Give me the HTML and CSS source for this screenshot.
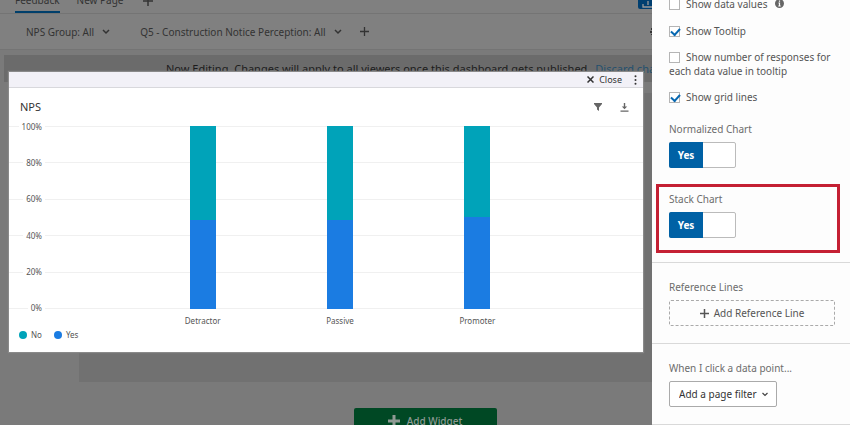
FILE: index.html
```html
<!DOCTYPE html>
<html lang="en">
<head>
<meta charset="utf-8">
<title>NPS dashboard</title>
<link rel="stylesheet" href="styles.css">
</head>
<body>
<div class="app">
  <main class="page">
    <header class="tabs">
      <a class="tab tab-active" href="#">Feedback</a>
      <a class="tab" href="#">New Page</a>
      <button class="plain tab-add" aria-label="Add page"><svg width="10" height="10" viewBox="0 0 10 10"><path d="M5 0v10M0 5h10" stroke="currentColor" stroke-width="1.5"/></svg></button>
      <button class="share" aria-label="Publish"><svg width="10" height="7" viewBox="0 0 10 7"><path d="M1 3v3h9M6 0v4" fill="none" stroke="currentColor" stroke-width="1.3"/></svg></button>
    </header>
    <nav class="filters">
      <button class="plain filter">NPS Group: All <svg width="8" height="6" viewBox="0 0 8 6"><path d="M1 1l3 3 3-3" fill="none" stroke="currentColor" stroke-width="1.5"/></svg></button>
      <button class="plain filter">Q5 - Construction Notice Perception: All <svg width="8" height="6" viewBox="0 0 8 6"><path d="M1 1l3 3 3-3" fill="none" stroke="currentColor" stroke-width="1.5"/></svg></button>
      <button class="plain" aria-label="Add filter"><svg width="9" height="9" viewBox="0 0 9 9"><path d="M4.500 0v9M0 4.500h9" stroke="currentColor" stroke-width="1.300"/></svg></button>
      <button class="plain gear" aria-label="Settings"><svg width="3" height="10" viewBox="0 0 3 10"><path d="M1 4h2v2H1zM2 1h1v2H2zM2 7h1v1H2z" fill="currentColor"/></svg></button>
    </nav>
    <div class="banner"><span>Now Editing. Changes will apply to all viewers once this dashboard gets published.</span><a href="#">Discard changes</a></div>
    <div class="canvas"></div>
    <button class="add-widget"><svg width="12" height="12" viewBox="0 0 12 12"><path d="M6 0v12M0 6h12" stroke="currentColor" stroke-width="3"/></svg>Add Widget</button>

    <section class="widget">
      <div class="widget-bar">
        <button class="plain close"><svg width="7" height="7" viewBox="0 0 7 7"><path d="M.5 .5l6 6M6.500 .5l-6 6" stroke="currentColor" stroke-width="1.5"/></svg>Close</button>
        <button class="plain" aria-label="More"><svg width="3" height="10" viewBox="0 0 3 10" fill="currentColor"><circle cx="1.500" cy="1.200" r="1"/><circle cx="1.500" cy="5" r="1"/><circle cx="1.500" cy="8.800" r="1"/></svg></button>
      </div>
      <div class="widget-head">
        <h2>NPS</h2>
        <button class="plain" aria-label="Filter"><svg width="8" height="8" viewBox="0 0 8 8"><path d="M0 0h8v1L5 4.500V8L3 6.500v-2L0 1z" fill="currentColor"/></svg></button>
        <button class="plain" aria-label="Download"><svg width="9" height="9" viewBox="0 0 9 9"><path d="M3.800 0h1.400v3.500h2L4.500 6.300 1.800 3.500h2zM.5 7.500h8v1.200h-8z" fill="currentColor"/></svg></button>
      </div>
      <div class="chart">
        <div class="grid">
          <div class="tick"><span>100%</span></div>
          <div class="tick"><span>80%</span></div>
          <div class="tick"><span>60%</span></div>
          <div class="tick"><span>40%</span></div>
          <div class="tick"><span>20%</span></div>
          <div class="tick"><span>0%</span></div>
        </div>
        <div class="bars">
          <div class="bar"><div class="yes" style="height:48.6%"></div></div>
          <div class="bar"><div class="yes" style="height:48.6%"></div></div>
          <div class="bar"><div class="yes" style="height:50.3%"></div></div>
        </div>
      </div>
      <div class="categories"><span>Detractor</span><span>Passive</span><span>Promoter</span></div>
      <div class="legend"><span class="key key-no">No</span><span class="key key-yes">Yes</span></div>
    </section>
  </main>

  <aside class="panel">
    <div class="options">
      <div class="option option-first"><label><input type="checkbox">Show data values</label><svg class="info" width="9" height="9" viewBox="0 0 9 9"><circle cx="4.500" cy="4.500" r="4.500" fill="#666"/><path d="M4.500 1.500v1.300M3.500 4h1v3M3.300 7h2.400" fill="none" stroke="#fff" stroke-width="1.200"/></svg></div>
      <div class="option"><label><input type="checkbox" checked>Show Tooltip</label></div>
      <div class="option"><label><input type="checkbox">Show number of responses for each data value in tooltip</label></div>
      <div class="option"><label><input type="checkbox" checked>Show grid lines</label></div>
    </div>
    <div class="field normalized">
      <span class="label">Normalized Chart</span>
      <button class="toggle" role="switch" aria-checked="true" aria-label="Normalized Chart"><span>Yes</span></button>
    </div>
    <div class="field stack">
      <span class="label">Stack Chart</span>
      <button class="toggle" role="switch" aria-checked="true" aria-label="Stack Chart"><span>Yes</span></button>
    </div>
    <div class="field block">
      <span class="label">Reference Lines</span>
      <button class="add-line"><svg width="9" height="9" viewBox="0 0 9 9"><path d="M4.500 0v9M0 4.500h9" stroke="currentColor" stroke-width="1.500"/></svg>Add Reference Line</button>
    </div>
    <div class="field block">
      <label class="label" for="action">When I click a data point...</label>
      <div class="select"><select id="action"><option>Add a page filter</option></select><svg width="6" height="5" viewBox="0 0 6 5"><path d="M.5 1L3 3.500 5.500 1" fill="none" stroke="#444" stroke-width="1.200"/></svg></div>
    </div>
    <div class="block"></div>
  </aside>
</div>
</body>
</html>
```
FILE: styles.css
```css
* { box-sizing: border-box; }
body {
  margin: 0;
  font: 10px/14px "Noto Sans", "Open Sans", sans-serif;
  color: #333;
}
button, select { font: inherit; color: inherit; }
button { padding: 0; }
svg { flex: none; display: block; }
.plain { border: 0; background: none; display: flex; align-items: center; }

.app { display: flex; height: 100vh; overflow: hidden; }
.page {
  position: relative;
  flex: 1;
  min-width: 0;
  overflow: hidden;
  display: flex;
  flex-direction: column;
  background: #7a7a7a;
}
.tabs {
  height: 14px;
  flex: none;
  display: flex;
  align-items: flex-end;
  padding-left: 15px;
  gap: 17px;
  background: #808080;
  border-bottom: 1px solid #747474;
}
.tab { height: 20px; color: #333; text-decoration: none; }
.tab-active { border-bottom: 2px solid #003f6b; }
.tab-add { height: 25px; margin-left: 3px; align-items: center; }
.share {
  align-self: flex-start;
  margin-left: auto;
  width: 14px;
  height: 9px;
  border: 0;
  border-radius: 0 0 0 2px;
  background: #003f70;
  color: #999;
  padding-left: 4px;
}
.filters {
  height: 36px;
  flex: none;
  display: flex;
  align-items: center;
  gap: 18px;
  padding-left: 26px;
  background: #808080;
  border-bottom: 1px solid #747474;
}
.filter { gap: 8px; }
.filter:first-child { margin-right: 12px; }
.gear { margin-left: auto; }
.banner {
  height: 27px;
  flex: none;
  margin: 5px 0 0 4px;
  padding-left: 162px;
  display: flex;
  align-items: center;
  gap: 5px;
  white-space: nowrap;
  overflow: hidden;
  font-size: 11px;
  color: #1c1c1c;
  background: #6b6b6b;
}
.banner a { color: #24506e; text-decoration: none; }
.canvas { height: 289px; flex: none; margin: 11px 0 0 79px; background: #717171; }
.add-widget {
  flex: none;
  align-self: center;
  margin: 26px 0 0 198px;
  width: 143px;
  height: 26px;
  display: flex;
  align-items: center;
  justify-content: center;
  gap: 7px;
  border: 0;
  border-radius: 2px;
  background: #004824;
  color: #8f9a94;
  font-weight: 500;
}

/* Expanded widget floating over the dimmed dashboard */
.widget {
  position: absolute;
  top: 72px;
  left: 9px;
  right: 9px;
  height: 280px;
  background: #fff;
  box-shadow: 0 0 1px 1px #8a8a8a;
  font-size: 8px;
  line-height: 12px;
  color: #555;
}
.widget-bar {
  height: 16px;
  display: flex;
  justify-content: flex-end;
  gap: 12px;
  padding-right: 6px;
  background: #f2f1f7;
  border-bottom: 1px solid #d8d8dc;
  font-size: 9px;
  color: #333;
}
.close { gap: 5px; }
.widget-head {
  height: 38px;
  display: flex;
  align-items: center;
  gap: 18px;
  padding: 0 14px 0 11px;
  color: #666;
}
.widget-head h2 { margin: 0 auto 0 0; font-size: 11px; font-weight: 400; color: #333; }
.chart { display: grid; height: 183px; }
.grid, .bars { grid-area: 1 / 1; }
.grid { display: flex; flex-direction: column; justify-content: space-between; }
.tick { height: 1px; display: grid; grid-template-columns: 36px; align-items: center; align-content: center; background: #f0f0f0; }
.tick span { justify-self: end; padding: 0 3px; background: #fff; }
.bars, .categories { display: grid; grid-template-columns: repeat(3, 1fr); justify-items: center; padding: 0 97px 0 125px; }
.bar {
  width: 26px;
  height: 183px;
  display: flex;
  flex-direction: column;
  justify-content: flex-end;
  background: #00a3b9;
}
.yes { background: #1b7ce2; }
.categories { margin-top: 6px; }
.legend { display: flex; gap: 12px; margin-top: 2px; padding-left: 10px; }
.key { display: flex; align-items: center; gap: 4px; }
.key::before { content: ""; width: 8px; height: 8px; border-radius: 50%; }
.key-no::before { background: #00a3b9; }
.key-yes::before { background: #1b7ce2; }

.panel { flex: none; width: 198px; background: #fdfdfd; color: #555; overflow: hidden; }
.options { display: flex; flex-direction: column; gap: 12px; padding: 0 17px; }
.option-first { display: flex; align-items: center; gap: 8px; height: 13px; margin-top: -3px; margin-bottom: 2px; }
.option-first input { margin-right: 8px; }
input[type="checkbox"] {
  appearance: none;
  position: relative;
  width: 11px;
  height: 11px;
  margin: 0 6px 0 0;
  vertical-align: -2px;
  border: 1px solid #b5b5b5;
  background: #fff;
}
input[type="checkbox"]:checked::after {
  content: "";
  position: absolute;
  left: 1px;
  top: 1px;
  width: 7px;
  height: 4px;
  border: solid #0768b1;
  border-width: 0 0 2px 2px;
  transform: rotate(-48deg);
}
.field { display: flex; flex-direction: column; align-items: flex-start; gap: 6px; padding: 0 15px 0 17px; }
.label { color: #6c6c6c; }
.normalized { margin-top: 18px; }
.toggle {
  width: 67px;
  height: 26px;
  display: flex;
  border: 1px solid #bbb;
  border-radius: 2px;
  background: #fff;
}
.toggle span {
  width: 34px;
  margin: -1px;
  border-radius: 2px 0 0 2px;
  line-height: 26px;
  font-weight: 700;
  color: #fff;
  background: #0061a5;
}
.stack { margin: 16px 10px 9px 4px; padding: 5px 10px 12px; border: 3px solid #c42033; }
.block { border-top: 1px solid #d9d9d9; padding-top: 17px; padding-bottom: 17px; }
.add-line {
  width: 100%;
  height: 26px;
  display: flex;
  align-items: center;
  justify-content: center;
  gap: 5px;
  border: 1px dashed #aaa;
  border-radius: 2px;
  background: none;
}
.select { position: relative; }
select {
  appearance: none;
  width: 108px;
  height: 26px;
  padding: 0 9px;
  border: 1px solid #aaa;
  border-radius: 2px;
  background: #fff;
  color: #333;
}
.select svg { position: absolute; right: 9px; top: 11px; pointer-events: none; }
```
